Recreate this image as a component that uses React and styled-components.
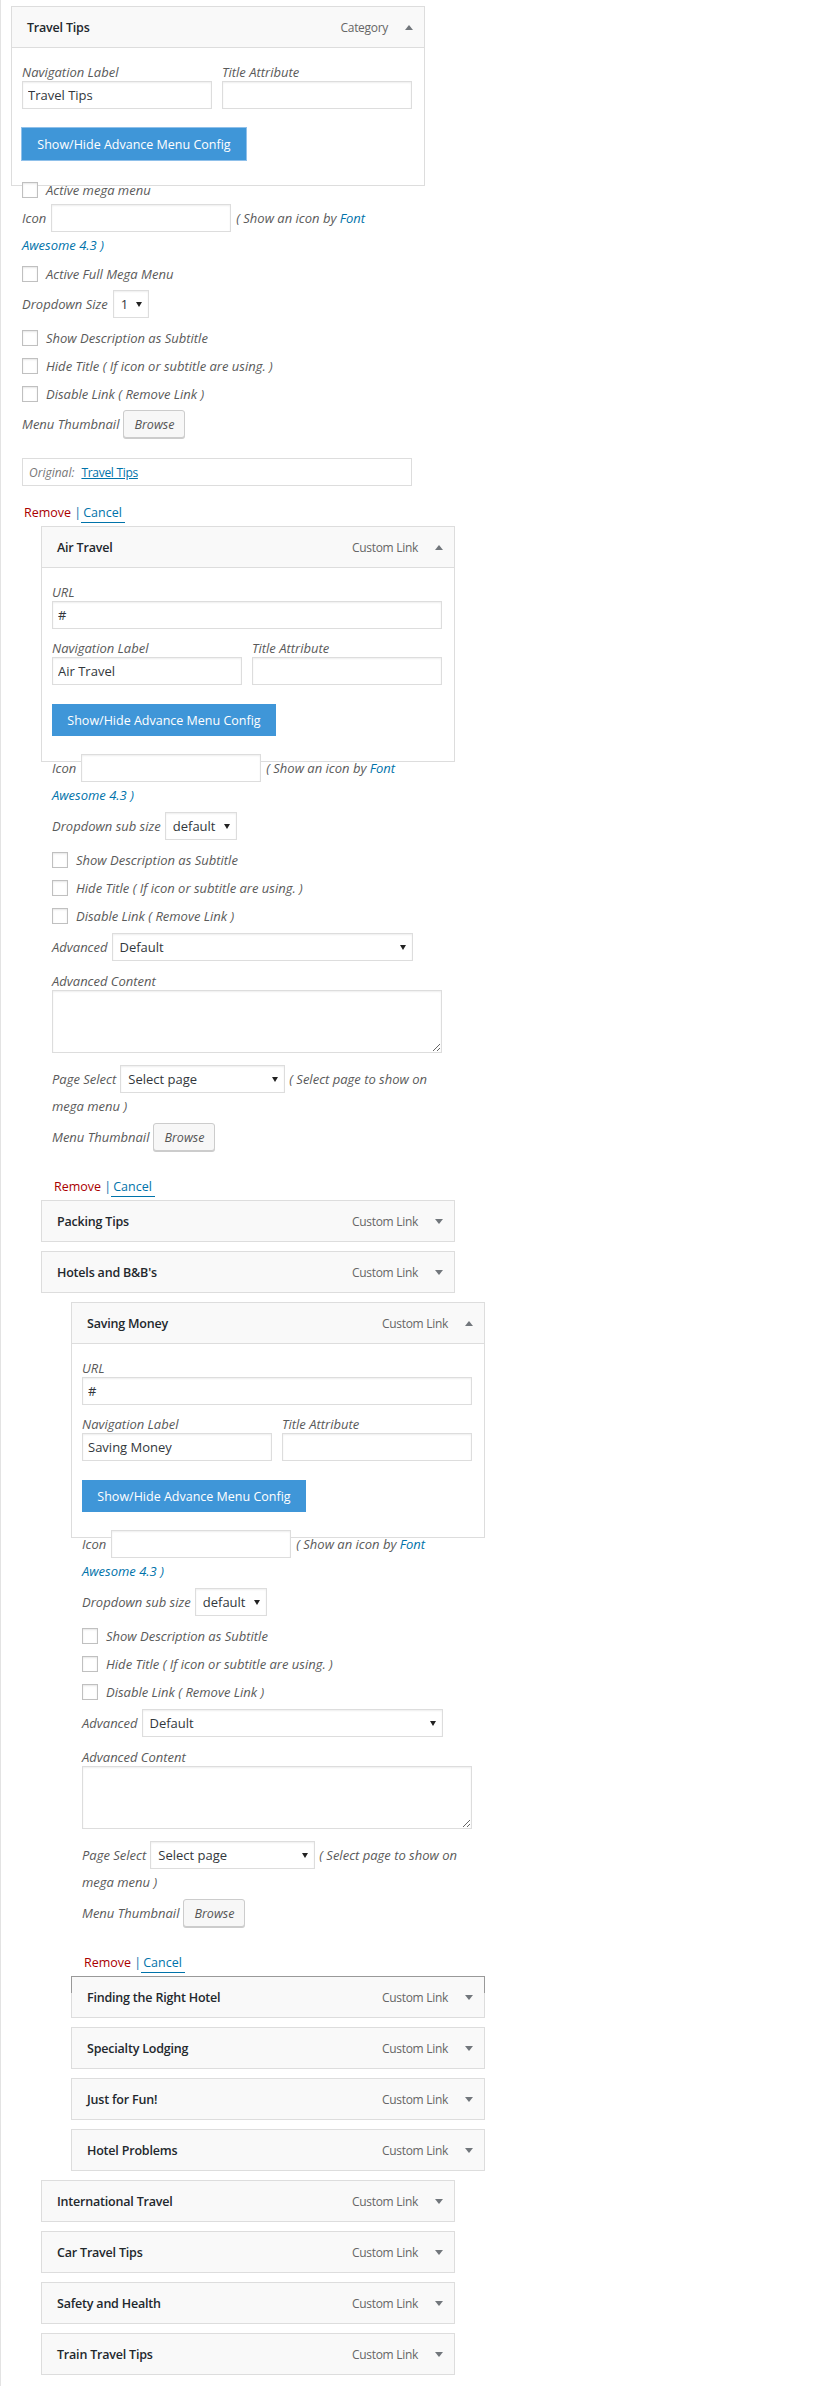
import React from 'react';
import styled, { createGlobalStyle, css } from 'styled-components';

const GlobalStyle = createGlobalStyle`
  * { box-sizing: border-box; }
  html, body { margin: 0; padding: 0; background: #fff; }
  body {
    font-family: "Open Sans", "Noto Sans", sans-serif;
    font-size: 13px;
    color: #444;
  }
`;

const FONT = `"Open Sans", "Noto Sans", sans-serif`;
const LABEL = '#5a5a5a';

const Page = styled.div`
  min-height: 100vh;
  border-left: 1px solid #e3e3e3;
  padding: 6px 0 9px 10px;
  display: flex;
  flex-direction: column;
  gap: 9px;
`;

const Item = styled.div`
  margin-left: ${(p) => p.$depth * 30}px;
  width: 414px;
`;

const Handle = styled.div`
  position: relative;
  display: flex;
  align-items: center;
  height: 42px;
  padding: 0 11px 0 15px;
  background: #f9f9f9;
  border: 1px solid #dddddd;
  ${(p) =>
    p.$highlight &&
    css`
      &::before {
        content: '';
        position: absolute;
        left: -1px;
        right: -1px;
        top: -1px;
        height: 16px;
        border: 1px solid #999;
        border-bottom: none;
      }
    `}
`;

const Title = styled.span`
  flex: 1;
  font-size: 12.5px;
  font-weight: 600;
  letter-spacing: -0.2px;
  color: #23282d;
`;

const ItemType = styled.span`
  font-size: 12px;
  letter-spacing: -0.3px;
  color: #666;
  margin-right: 17px;
`;

const Arrow = ({ up }) => (
  <svg width="8" height="5" viewBox="0 0 8 5" style={{ flex: 'none' }}>
    {up ? <polygon points="0,5 8,5 4,0" fill="#72777c" /> : <polygon points="0,0 8,0 4,5" fill="#72777c" />}
  </svg>
);

const Settings = styled.div`
  border: 1px solid #dddddd;
  border-top: none;
  padding: 15px 10px 25px;
`;

const FieldRow = styled.div`
  display: flex;
  gap: 10px;
  margin-top: ${(p) => p.$mt || 0}px;
`;

const Field = styled.label`
  display: block;
  width: ${(p) => p.$w}px;
`;

const FieldLabel = styled.span`
  display: block;
  line-height: 18px;
  font-style: italic;
  font-size: 13px;
  color: ${LABEL};
`;

const TextInput = styled.input`
  display: block;
  width: ${(p) => (p.$w ? `${p.$w}px` : '100%')};
  height: 28px;
  margin: 0;
  padding: 0 5px;
  border: 1px solid #dddddd;
  border-radius: 0;
  background: #fff;
  box-shadow: inset 0 1px 2px rgba(0, 0, 0, 0.07);
  font-family: ${FONT};
  font-size: 13px;
  color: #32373c;
  outline: none;
  flex: none;
`;

const ConfigButton = styled.button`
  display: block;
  margin-top: 19px;
  width: 224px;
  height: 32px;
  padding: 0;
  border: none;
  border-radius: 0;
  background: #3f96d8;
  color: #fff;
  font-family: ${FONT};
  font-size: 12.5px;
  cursor: pointer;
  ${(p) =>
    p.$focused &&
    css`
      box-shadow: 0 0 0 1px #8fc0ea;
    `}
`;

const Advanced = styled.div`
  margin-top: ${(p) => p.$mt}px;
  padding-left: 11px;
  display: flex;
  flex-direction: column;
  align-items: flex-start;
`;

const Row = styled.div`
  display: flex;
  align-items: center;
  gap: ${(p) => (p.$gap == null ? 4 : p.$gap)}px;
  height: ${(p) => p.$h || 28}px;
  margin-top: ${(p) => p.$mt || 0}px;
  white-space: nowrap;
`;

const RowLabel = styled.span`
  font-style: italic;
  font-size: 13px;
  color: ${LABEL};
`;

const Help = styled.span`
  font-style: italic;
  font-size: 13px;
  color: ${LABEL};
`;

const HelpLink = styled.a`
  font-style: italic;
  color: #0073aa;
  text-decoration: none;
`;

const HelpLine = styled.div`
  height: 26px;
  line-height: 26px;
  font-style: italic;
  font-size: 13px;
  color: ${(p) => (p.$link ? '#0073aa' : LABEL)};
`;

const CheckRow = styled.label`
  display: flex;
  align-items: center;
  gap: 8px;
  height: 28px;
  margin-top: ${(p) => p.$mt || 0}px;
  font-style: italic;
  font-size: 13px;
  color: ${LABEL};
  white-space: nowrap;
`;

const Check = styled.input.attrs({ type: 'checkbox' })`
  appearance: none;
  width: 16px;
  height: 16px;
  margin: 0;
  border: 1px solid #c0c0c0;
  background: #fff;
  box-shadow: inset 0 1px 2px rgba(0, 0, 0, 0.1);
  flex: none;
`;

const SelectWrap = styled.span`
  position: relative;
  display: inline-flex;
  flex: none;
  width: ${(p) => p.$w}px;
  height: 28px;
`;

const SelectBox = styled.select`
  appearance: none;
  width: 100%;
  height: 100%;
  margin: 0;
  padding: 0 18px 0 7px;
  border: 1px solid #dddddd;
  border-radius: 0;
  background: #fff;
  box-shadow: inset 0 1px 2px rgba(0, 0, 0, 0.07);
  font-family: ${FONT};
  font-size: 13px;
  color: #32373c;
  outline: none;
`;

const SelectArrow = styled.svg`
  position: absolute;
  right: 7px;
  top: 12px;
  pointer-events: none;
`;

const Select = ({ w, value }) => (
  <SelectWrap $w={w}>
    <SelectBox defaultValue={value}>
      <option value={value}>{value}</option>
    </SelectBox>
    <SelectArrow width="6" height="5" viewBox="0 0 6 5">
      <polygon points="0,0 6,0 3,5" fill="#222" />
    </SelectArrow>
  </SelectWrap>
);

const BrowseButton = styled.button`
  flex: none;
  width: 62px;
  height: 28px;
  padding: 0;
  border: 1px solid #cccccc;
  border-radius: 3px;
  background: #f7f7f7;
  box-shadow: 0 1px 0 #cccccc;
  font-family: ${FONT};
  font-size: 12.5px;
  font-style: italic;
  color: #555;
`;

const AreaLabel = styled.div`
  margin-top: 11px;
  line-height: 18px;
  font-style: italic;
  font-size: 13px;
  color: ${LABEL};
`;

const TextArea = styled.textarea`
  display: block;
  width: 390px;
  height: 63px;
  margin: 0;
  border: 1px solid #dddddd;
  border-radius: 0;
  box-shadow: inset 0 1px 2px rgba(0, 0, 0, 0.07);
  font-family: ${FONT};
  outline: none;
`;

const Original = styled.div`
  display: flex;
  align-items: center;
  gap: 7px;
  width: 390px;
  height: 28px;
  margin-top: 20px;
  padding: 0 6px;
  border: 1px solid #dddddd;
  font-size: 12px;
`;

const OriginalLabel = styled.span`
  font-style: italic;
  color: #777;
`;

const OriginalLink = styled.a`
  color: #0073aa;
  letter-spacing: -0.3px;
  text-decoration: underline;
`;

const Actions = styled.div`
  margin-top: ${(p) => p.$mt}px;
  height: 8px;
  line-height: 8px;
  padding-left: 2px;
  font-size: 12.5px;
  color: #0073aa;
  white-space: nowrap;
`;

const RemoveLink = styled.a`
  color: #a00;
  text-decoration: none;
`;

const CancelLink = styled.a`
  color: #0073aa;
  text-decoration: none;
  padding: 0 3px 1px 2px;
  border-bottom: 1px solid #0073aa;
`;

const ItemActions = ({ mt }) => (
  <Actions $mt={mt}>
    <RemoveLink>Remove</RemoveLink> |<CancelLink>Cancel</CancelLink>
  </Actions>
);

const IconRows = () => (
  <>
    <Row $gap={5}>
      <RowLabel>Icon</RowLabel>
      <TextInput $w={180} />
      <Help>
        ( Show an icon by <HelpLink>Font</HelpLink>
      </Help>
    </Row>
    <HelpLine $link>Awesome 4.3 )</HelpLine>
  </>
);

const CheckGroup = ({ mt }) => (
  <>
    <CheckRow $mt={mt}>
      <Check />
      Show Description as Subtitle
    </CheckRow>
    <CheckRow>
      <Check />
      Hide Title ( If icon or subtitle are using. )
    </CheckRow>
    <CheckRow>
      <Check />
      Disable Link ( Remove Link )
    </CheckRow>
  </>
);

const CategorySettings = ({ title }) => (
  <>
    <Settings>
      <FieldRow>
        <Field $w={190}>
          <FieldLabel>Navigation Label</FieldLabel>
          <TextInput defaultValue={title} />
        </Field>
        <Field $w={190}>
          <FieldLabel>Title Attribute</FieldLabel>
          <TextInput />
        </Field>
      </FieldRow>
      <ConfigButton $focused>Show/Hide Advance Menu Config</ConfigButton>
    </Settings>
    <Advanced $mt={-10}>
      <CheckRow>
        <Check />
        Active mega menu
      </CheckRow>
      <IconRows />
      <CheckRow $mt={2}>
        <Check />
        Active Full Mega Menu
      </CheckRow>
      <Row $mt={2} $gap={5}>
        <RowLabel>Dropdown Size</RowLabel>
        <Select w={36} value="1" />
      </Row>
      <CheckGroup mt={6} />
      <Row $mt={2}>
        <RowLabel>Menu Thumbnail</RowLabel>
        <BrowseButton>Browse</BrowseButton>
      </Row>
      <Original>
        <OriginalLabel>Original:</OriginalLabel>
        <OriginalLink>{title}</OriginalLink>
      </Original>
      <ItemActions mt={23} />
    </Advanced>
  </>
);

const CustomSettings = ({ title }) => (
  <>
    <Settings>
      <Field $w={390}>
        <FieldLabel>URL</FieldLabel>
        <TextInput defaultValue="#" />
      </Field>
      <FieldRow $mt={10}>
        <Field $w={190}>
          <FieldLabel>Navigation Label</FieldLabel>
          <TextInput defaultValue={title} />
        </Field>
        <Field $w={190}>
          <FieldLabel>Title Attribute</FieldLabel>
          <TextInput />
        </Field>
      </FieldRow>
      <ConfigButton>Show/Hide Advance Menu Config</ConfigButton>
    </Settings>
    <Advanced $mt={-8}>
      <IconRows />
      <Row $mt={4}>
        <RowLabel>Dropdown sub size</RowLabel>
        <Select w={72} value="default" />
      </Row>
      <CheckGroup mt={6} />
      <Row $mt={3}>
        <RowLabel>Advanced</RowLabel>
        <Select w={301} value="Default" />
      </Row>
      <AreaLabel>Advanced Content</AreaLabel>
      <TextArea />
      <Row $mt={12} $gap={4}>
        <RowLabel>Page Select</RowLabel>
        <Select w={165} value="Select page" />
        <Help>( Select page to show on</Help>
      </Row>
      <HelpLine>mega menu )</HelpLine>
      <Row $mt={4}>
        <RowLabel>Menu Thumbnail</RowLabel>
        <BrowseButton>Browse</BrowseButton>
      </Row>
      <ItemActions mt={32} />
    </Advanced>
  </>
);

const items = [
  { depth: 0, title: 'Travel Tips', type: 'Category', open: 'category' },
  { depth: 1, title: 'Air Travel', type: 'Custom Link', open: 'custom' },
  { depth: 1, title: 'Packing Tips', type: 'Custom Link' },
  { depth: 1, title: "Hotels and B&B's", type: 'Custom Link' },
  { depth: 2, title: 'Saving Money', type: 'Custom Link', open: 'custom' },
  { depth: 2, title: 'Finding the Right Hotel', type: 'Custom Link', highlight: true },
  { depth: 2, title: 'Specialty Lodging', type: 'Custom Link' },
  { depth: 2, title: 'Just for Fun!', type: 'Custom Link' },
  { depth: 2, title: 'Hotel Problems', type: 'Custom Link' },
  { depth: 1, title: 'International Travel', type: 'Custom Link' },
  { depth: 1, title: 'Car Travel Tips', type: 'Custom Link' },
  { depth: 1, title: 'Safety and Health', type: 'Custom Link' },
  { depth: 1, title: 'Train Travel Tips', type: 'Custom Link' },
];

export default function App() {
  return (
    <>
      <GlobalStyle />
      <Page>
        {items.map((it) => (
          <Item key={it.title} $depth={it.depth}>
            <Handle $highlight={it.highlight}>
              <Title>{it.title}</Title>
              <ItemType>{it.type}</ItemType>
              <Arrow up={!!it.open} />
            </Handle>
            {it.open === 'category' && <CategorySettings title={it.title} />}
            {it.open === 'custom' && <CustomSettings title={it.title} />}
          </Item>
        ))}
      </Page>
    </>
  );
}
